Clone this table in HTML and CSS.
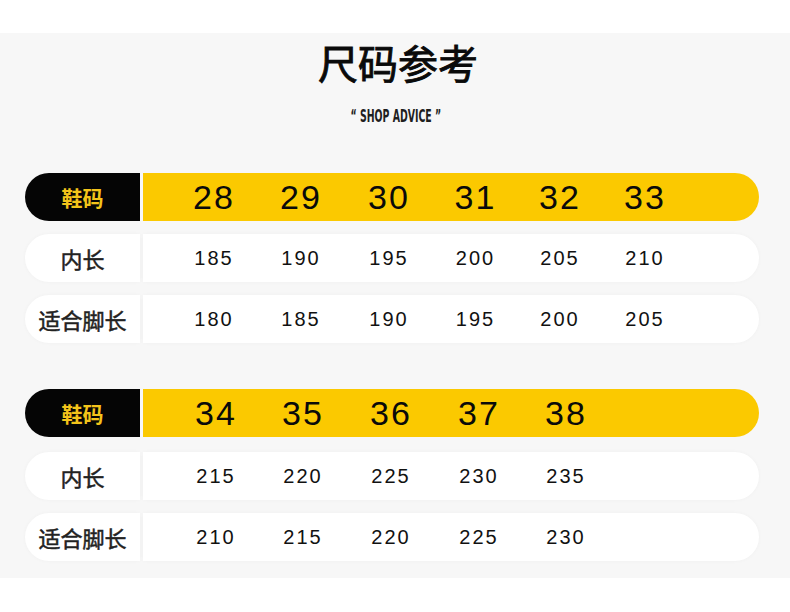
FILE: index.html
```html
<!DOCTYPE html>
<html lang="zh">
<head>
<meta charset="utf-8">
<title>尺码参考</title>
<link rel="stylesheet" href="styles.css">
</head>
<body>
<div class="panel">
  <h1 class="title">尺码参考</h1>
  <div class="sub"><span class="sub-text">“ SHOP ADVICE ”</span></div>

  <div class="table">
    <div class="row head">
      <div class="label">鞋码</div>
      <div class="vals"><span>28</span><span>29</span><span>30</span><span>31</span><span>32</span><span>33</span></div>
    </div>
    <div class="row">
      <div class="label">内长</div>
      <div class="vals"><span>185</span><span>190</span><span>195</span><span>200</span><span>205</span><span>210</span></div>
    </div>
    <div class="row">
      <div class="label">适合脚长</div>
      <div class="vals"><span>180</span><span>185</span><span>190</span><span>195</span><span>200</span><span>205</span></div>
    </div>
  </div>

  <div class="table second">
    <div class="row head">
      <div class="label">鞋码</div>
      <div class="vals"><span>34</span><span>35</span><span>36</span><span>37</span><span>38</span></div>
    </div>
    <div class="row">
      <div class="label">内长</div>
      <div class="vals"><span>215</span><span>220</span><span>225</span><span>230</span><span>235</span></div>
    </div>
    <div class="row">
      <div class="label">适合脚长</div>
      <div class="vals"><span>210</span><span>215</span><span>220</span><span>225</span><span>230</span></div>
    </div>
  </div>
</div>
</body>
</html>
```

FILE: styles.css
```css
html, body {
  margin: 0;
  padding: 0;
  background: #ffffff;
}

body {
  width: 790px;
  height: 612px;
  overflow: hidden;
  font-family: "Liberation Sans", Arial, sans-serif;
}

.panel {
  margin-top: 33px;
  background: #f7f7f7;
  padding: 9px 0 17px;
  display: flex;
  flex-direction: column;
}

.title {
  margin: 0;
  padding-left: 6px;
  font-family: "Noto Sans CJK SC", sans-serif;
  font-weight: 400;
  font-size: 40px;
  line-height: 40px;
  text-align: center;
  color: #0a0a0a;
  -webkit-text-stroke: 0.9px #0a0a0a;
}

.sub {
  margin-top: 23px;
  height: 20px;
  display: flex;
  justify-content: center;
  align-items: center;
}

.sub-text {
  display: inline-block;
  font-family: "DejaVu Sans Condensed", "DejaVu Sans", sans-serif;
  font-weight: 700;
  font-size: 18px;
  color: #1e1e1e;
  transform: scaleX(0.58);
  white-space: nowrap;
  padding-left: 2px;
}

.table {
  margin: 48px 0 0 25px;
  width: 734px;
  display: flex;
  flex-direction: column;
  gap: 13px;
}

.table.second {
  margin-top: 46px;
}

.second .head {
  margin-bottom: 2px;
}

.row {
  height: 48px;
  display: flex;
  gap: 3px;
}

.label {
  width: 115px;
  flex: none;
  border-radius: 24px 0 0 24px;
  background: #ffffff;
  display: flex;
  align-items: center;
  justify-content: center;
  font-family: "Noto Sans CJK SC", sans-serif;
  font-weight: 400;
  font-size: 22px;
  color: #222222;
  -webkit-text-stroke: 0.5px #222222;
  box-shadow: 0 0 4px rgba(0, 0, 0, 0.03);
}

.vals {
  flex: 1;
  border-radius: 0 24px 24px 0;
  background: #ffffff;
  display: grid;
  grid-template-columns: 86px 88px 88px 85px 84px 86px;
  align-items: center;
  padding-left: 27px;
  box-shadow: 0 0 4px rgba(0, 0, 0, 0.03);
}

.second .vals {
  grid-template-columns: 86px 88px 88px 88px 86px;
  padding-left: 29px;
}

.vals span {
  text-align: center;
  font-size: 20px;
  letter-spacing: 2px;
  padding-left: 2px;
  color: #111111;
}

.head .label {
  background: #050505;
  color: #f3c41a;
  font-weight: 700;
  font-size: 21px;
  -webkit-text-stroke: 0;
  box-shadow: none;
}

.head .vals {
  background: #fbc900;
  box-shadow: none;
}

.head .vals span {
  font-size: 34px;
  letter-spacing: 2px;
  color: #0a0a0a;
}
```
